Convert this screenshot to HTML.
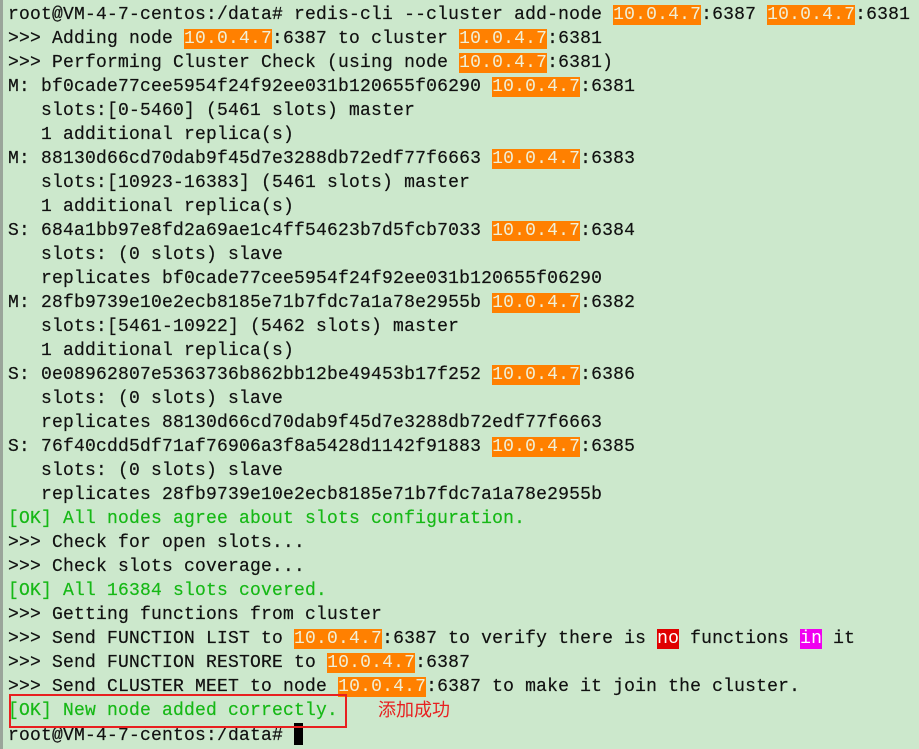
<!DOCTYPE html>
<html><head><meta charset="utf-8"><style>
html,body{margin:0;padding:0;}
body{width:919px;height:749px;background:#cce8cc;position:relative;overflow:hidden;}
.lb{position:absolute;left:0;top:0;width:3px;height:749px;background:#9aa59a;}
pre{position:absolute;left:8px;top:3px;margin:0;font-family:"Liberation Mono",monospace;font-size:18px;letter-spacing:0.2px;line-height:24px;color:#111;-webkit-text-stroke:0.2px #111;}
.h{background:#ff8000;color:#f0f0d8;-webkit-text-stroke:0;}
.g{color:#16b816;-webkit-text-stroke:0.2px #16b816;}
.r{background:#e00000;color:#fff;-webkit-text-stroke:0;}
.m{background:#f000f0;color:#fff;-webkit-text-stroke:0;}
.cur{display:inline-block;width:9px;height:22px;background:#000;vertical-align:-5px;}
.box{position:absolute;left:9px;top:694px;width:334px;height:30px;border:2px solid #e82020;}
.cn{position:absolute;left:378px;top:697px;font-family:"Noto Sans CJK SC",sans-serif;font-size:18px;color:#e82020;line-height:24px;}
</style></head><body>
<div class="lb"></div>
<pre>root@VM-4-7-centos:/data# redis-cli --cluster add-node <span class="h">10.0.4.7</span>:6387 <span class="h">10.0.4.7</span>:6381
&gt;&gt;&gt; Adding node <span class="h">10.0.4.7</span>:6387 to cluster <span class="h">10.0.4.7</span>:6381
&gt;&gt;&gt; Performing Cluster Check (using node <span class="h">10.0.4.7</span>:6381)
M: bf0cade77cee5954f24f92ee031b120655f06290 <span class="h">10.0.4.7</span>:6381
   slots:[0-5460] (5461 slots) master
   1 additional replica(s)
M: 88130d66cd70dab9f45d7e3288db72edf77f6663 <span class="h">10.0.4.7</span>:6383
   slots:[10923-16383] (5461 slots) master
   1 additional replica(s)
S: 684a1bb97e8fd2a69ae1c4ff54623b7d5fcb7033 <span class="h">10.0.4.7</span>:6384
   slots: (0 slots) slave
   replicates bf0cade77cee5954f24f92ee031b120655f06290
M: 28fb9739e10e2ecb8185e71b7fdc7a1a78e2955b <span class="h">10.0.4.7</span>:6382
   slots:[5461-10922] (5462 slots) master
   1 additional replica(s)
S: 0e08962807e5363736b862bb12be49453b17f252 <span class="h">10.0.4.7</span>:6386
   slots: (0 slots) slave
   replicates 88130d66cd70dab9f45d7e3288db72edf77f6663
S: 76f40cdd5df71af76906a3f8a5428d1142f91883 <span class="h">10.0.4.7</span>:6385
   slots: (0 slots) slave
   replicates 28fb9739e10e2ecb8185e71b7fdc7a1a78e2955b
<span class="g">[OK] All nodes agree about slots configuration.</span>
&gt;&gt;&gt; Check for open slots...
&gt;&gt;&gt; Check slots coverage...
<span class="g">[OK] All 16384 slots covered.</span>
&gt;&gt;&gt; Getting functions from cluster
&gt;&gt;&gt; Send FUNCTION LIST to <span class="h">10.0.4.7</span>:6387 to verify there is <span class="r">no</span> functions <span class="m">in</span> it
&gt;&gt;&gt; Send FUNCTION RESTORE to <span class="h">10.0.4.7</span>:6387
&gt;&gt;&gt; Send CLUSTER MEET to node <span class="h">10.0.4.7</span>:6387 to make it join the cluster.
<span class="g">[OK] New node added correctly.</span>
root@VM-4-7-centos:/data# <span class="cur"></span></pre>
<div class="box"></div>
<div class="cn">添加成功</div>
</body></html>
